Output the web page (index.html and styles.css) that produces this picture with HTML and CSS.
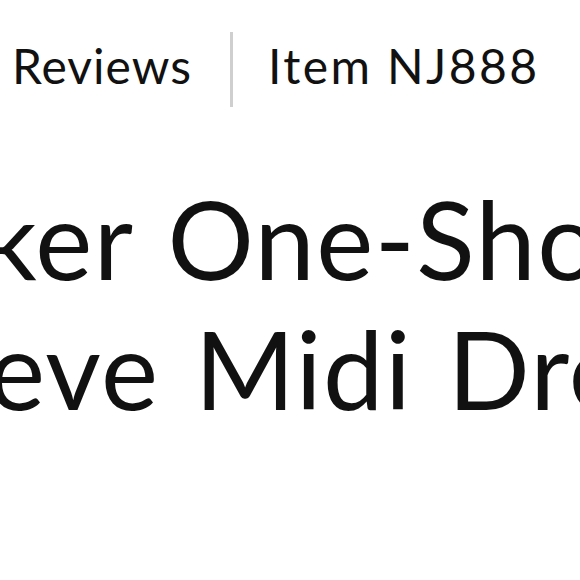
FILE: index.html
```html
<!DOCTYPE html>
<html lang="en">
  <head>
    <meta charset="UTF-8" />
    <meta name="viewport" content="width=device-width, initial-scale=1.0" />
    <title>Item NJ888</title>
    <link rel="stylesheet" href="styles.css">
  </head>
  <body>
    <div class="product-meta">
      <span class="meta-reviews">Reviews</span>
      <span class="meta-divider"></span>
      <span class="meta-item">Item NJ888</span>
    </div>

    <h1 class="product-title">
      <span class="title-line line-one">ker One-Shoulder</span>
      <span class="title-line line-two">eve Midi Dress</span>
    </h1>
  </body>
</html>
```

FILE: styles.css
```css
body {
  margin: 0;
  overflow: hidden;
  background: #fff;
  color: #111;
  font-family: "Lato", "Noto Sans", sans-serif;
}

.product-meta {
  display: flex;
  align-items: flex-start;
  padding: 32px 0 0 12px;
  font-size: 48px;
  font-weight: 400;
  line-height: 68px;
  white-space: nowrap;
}

.meta-reviews {
  letter-spacing: 1px;
}

.meta-divider {
  width: 3px;
  height: 75px;
  margin: 0 35px 0 38px;
  background-color: #cfcfcf;
}

.meta-item {
  letter-spacing: 2.4px;
}

.product-title {
  margin: 66px 0 0;
  font-size: 108px;
  font-weight: 400;
  line-height: 130px;
  letter-spacing: 1.5px;
  word-spacing: 6px;
  white-space: nowrap;
}

.title-line {
  display: block;
}

.line-one {
  margin-left: -18px;
}

.line-two {
  margin-left: -12px;
}
```
